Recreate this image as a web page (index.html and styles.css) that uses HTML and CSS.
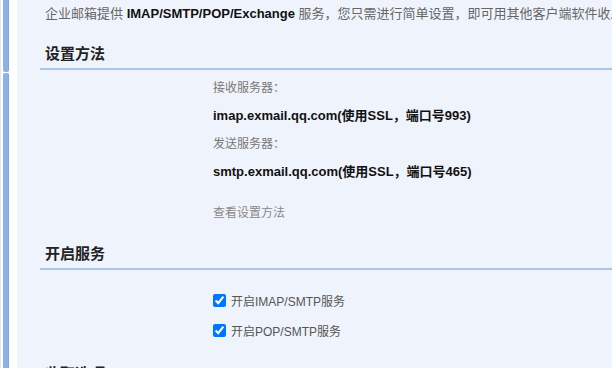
FILE: index.html
```html
<!DOCTYPE html>
<html lang="zh-CN">
<head>
<meta charset="utf-8">
<title>设置</title>
<link rel="stylesheet" href="styles.css">
</head>
<body>
<div class="page">
  <div class="rail"><div class="rail-bar top"></div><div class="rail-bar bottom"></div></div>
  <main class="main">
    <p class="intro">企业邮箱提供 <b>IMAP/SMTP/POP/Exchange</b> 服务，您只需进行简单设置，即可用其他客户端软件收发邮件。</p>

    <h2 class="section-title">设置方法</h2>
    <div class="section-body setup">
      <div class="label">接收服务器：</div>
      <div class="value">imap.exmail.qq.com(使用SSL，端口号993)</div>
      <div class="label">发送服务器：</div>
      <div class="value">smtp.exmail.qq.com(使用SSL，端口号465)</div>
      <a class="link">查看设置方法</a>
    </div>

    <h2 class="section-title">开启服务</h2>
    <div class="section-body services">
      <label class="check"><input type="checkbox" checked><span>开启IMAP/SMTP服务</span></label>
      <label class="check"><input type="checkbox" checked><span>开启POP/SMTP服务</span></label>
    </div>

    <h2 class="section-title">收取选项</h2>
  </main>
</div>
</body>
</html>
```
FILE: styles.css
```css
html, body {
  margin: 0;
  padding: 0;
  height: 100%;
  overflow: hidden;
  background: #eff4fc;
}
body {
  font-family: "Liberation Sans", Arial, "Noto Sans CJK SC", sans-serif;
  color: #333;
}
.page {
  display: flex;
  height: 368px;
}
.rail {
  width: 17px;
  flex: none;
  background: #ffffff;
  display: flex;
  flex-direction: column;
  gap: 1px;
  padding-left: 2px;
  box-sizing: border-box;
  border-left: 1px solid #dde6f3;
}
.rail-bar {
  width: 5px;
  background: #8db1e6;
  border-right: 1px solid #7fa5dc;
}
.rail-bar.top {
  height: 72px;
  border-radius: 0 0 2px 2px;
}
.rail-bar.bottom {
  flex: 1;
  border-radius: 2px 2px 0 0;
}
.main {
  flex: 1;
  min-width: 0;
  white-space: nowrap;
}
.intro {
  margin: 0;
  padding-left: 28px;
  line-height: 28px;
  font-size: 13px;
  color: #666;
}
.intro b {
  color: #111;
}
.section-title {
  margin: 12px 0 0 23px;
  padding-left: 5px;
  line-height: 28px;
  font-size: 15px;
  font-weight: bold;
  color: #222;
  border-bottom: 2px solid #a9c6ec;
}
.section-body {
  padding-left: 196px;
}
.setup {
  padding-top: 4px;
}
.label {
  line-height: 28px;
  font-size: 12px;
  color: #777;
}
.value {
  line-height: 28px;
  font-size: 13px;
  font-weight: bold;
  color: #111;
}
.link {
  display: block;
  margin-top: 13px;
  line-height: 28px;
  font-size: 12px;
  color: #888;
}
.setup + .section-title {
  margin-top: 13px;
}
.services {
  padding-top: 15px;
}
.check {
  display: flex;
  align-items: center;
  height: 30px;
  font-size: 12px;
  color: #555;
}
.check input {
  width: 13px;
  height: 13px;
  margin: 0 5px 0 0;
}
.services + .section-title {
  margin-top: 15px;
}
```
